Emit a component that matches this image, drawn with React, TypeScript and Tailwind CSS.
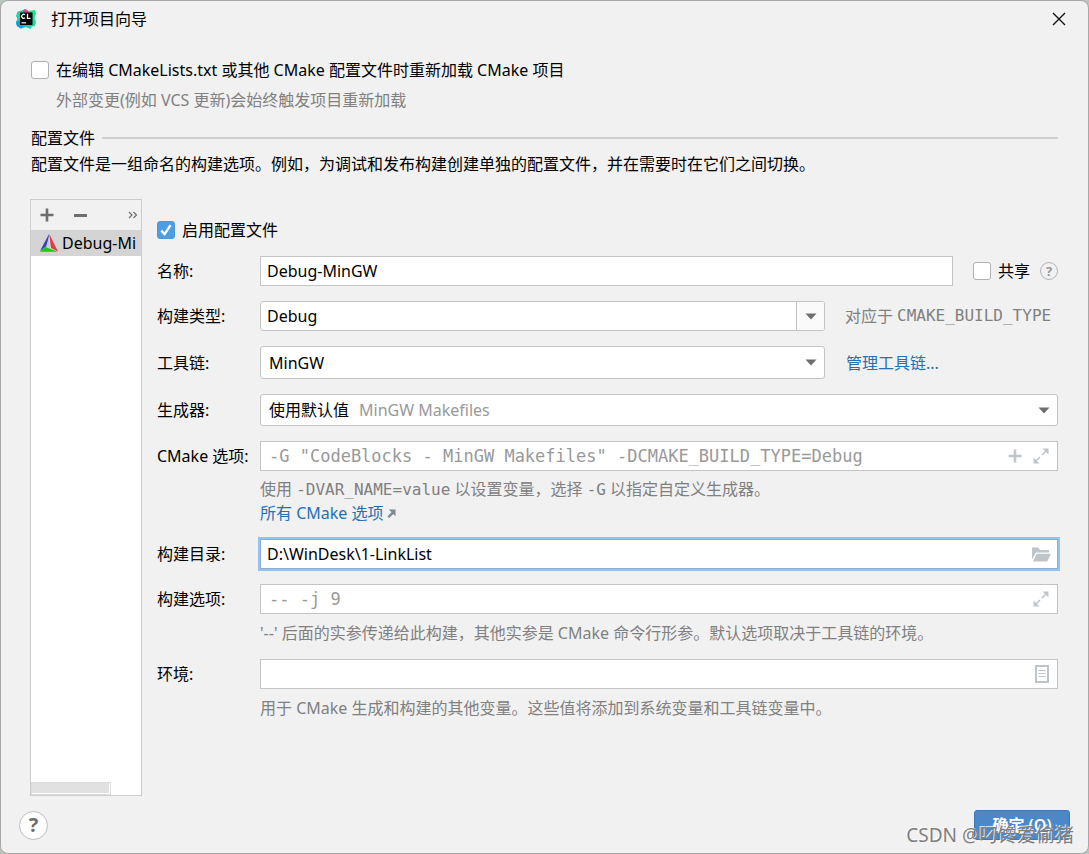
import React from "react";

const field = "w-full border border-[#c4c4c4] bg-white text-black outline-none";
const mono = "font-['DejaVu_Sans_Mono','Noto_Sans_CJK_SC',monospace]";
const hint = "text-[#808080]";

function CheckBox({ id, checked = false }: { id: string; checked?: boolean }) {
  return (
    <span className="relative flex h-[18px] w-[18px] shrink-0">
      <input
        id={id}
        type="checkbox"
        defaultChecked={checked}
        className="peer h-[18px] w-[18px] appearance-none rounded-[3px] border border-[#b0b0b0] bg-white checked:border-[#4b97d9] checked:bg-[#4f9ee3]"
      />
      <svg viewBox="0 0 18 18" className="pointer-events-none absolute inset-0 hidden h-[18px] w-[18px] peer-checked:block">
        <path d="M4.3 9.600l3.300 3.600 6-9" fill="none" stroke="#fff" strokeWidth="2.300" />
      </svg>
    </span>
  );
}

function Arrow() {
  return (
    <svg viewBox="0 0 12 7" className="h-[7px] w-3">
      <path d="M0.500 0.500h11L6 6.500z" fill="#6e6e6e" />
    </svg>
  );
}

function Logo() {
  return (
    <svg viewBox="0 0 20 20" className="h-5 w-5">
      <defs>
        <linearGradient id="cl" x1="0.9" y1="0" x2="0.1" y2="1">
          <stop offset="0" stopColor="#21e789" />
          <stop offset="0.6" stopColor="#1fd6a8" />
          <stop offset="1" stopColor="#009ae5" />
        </linearGradient>
      </defs>
      <path d="M1.500 2.500L7 1l4 1 8-1 1 4-1.500 4L20 13l-1 4-3 .5-1.500 2.500-4.500-2-5 1.500L1 17l-1-4 1.500-3L0 7z" fill="url(#cl)" />
      <path d="M6.500 2L8.500 0l3 1 1.500 3H7z" fill="#ed358c" />
      <path d="M0 13.500l3-2 4 5-2 3-4-2.500z" fill="#0a9fe0" />
      <path d="M4 3.500h12.500V16H4z" />
      <path d="M9 5.800a2 2 0 1 0 0 3M11.500 4.800v4.500h3" fill="none" stroke="#fff" strokeWidth="1.300" />
      <path d="M5.500 13.200h4.500v1.200H5.500z" fill="#fff" />
    </svg>
  );
}

function CMakeIcon() {
  return (
    <svg viewBox="0 0 18 18" className="h-[18px] w-[18px] shrink-0">
      <path d="M9 0L0 17l8-6z" fill="#3c3cc4" />
      <path d="M9.300 0L18 17.500l-7-3.500z" fill="#dd3f42" />
      <path d="M0 17.700l5-5 12.500 5z" fill="#14cc14" />
      <path d="M8.800 3l1.400 10.500-4-1.600z" fill="#c9c9cf" />
    </svg>
  );
}

function Expand() {
  return (
    <svg viewBox="0 0 16 16" className="h-4 w-4" fill="#bfc5c9">
      <path d="M9.500 0.500h6v6zM0.500 9.500v6h6z" />
      <path d="M13.500 2.500l-4.500 4.500M2.500 13.500l4.500-4.500" stroke="#bfc5c9" strokeWidth="1.500" />
    </svg>
  );
}

function Plus({ className }: { className: string }) {
  return (
    <svg viewBox="0 0 14 14" className={className} fill="currentColor">
      <path d="M5.700 0.500h2.600v5.200h5.200v2.600H8.300v5.200H5.700V8.300H0.500V5.700h5.200z" />
    </svg>
  );
}

function Row({ label, id, className, children }: { label: string; id: string; className: string; children: React.ReactNode }) {
  return (
    <div className={`flex items-center ${className}`}>
      <label htmlFor={id} className="w-[103px] shrink-0 whitespace-nowrap">{label}</label>
      {children}
    </div>
  );
}

export default function App() {
  return (
    <div className="min-h-screen bg-[#b9c4bb] font-['Noto_Sans','Noto_Sans_CJK_SC',sans-serif] text-base leading-6 text-black">
      <main className="relative flex min-h-screen flex-col rounded-lg border border-[#a8a8a8] bg-[#f1f1f1]">
        <header className="flex h-9 items-center pl-[15px] pr-[22px]">
          <Logo />
          <h1 className="ml-[15px] flex-1">打开项目向导</h1>
          <button type="button" aria-label="关闭" className="flex">
            <svg viewBox="0 0 14 14" className="h-[14px] w-[14px]">
              <path d="M1 1l12 12M13 1L1 13" stroke="#111" strokeWidth="1.400" />
            </svg>
          </button>
        </header>

        <section className="px-[30px] pt-[21px]">
          <div className="flex items-center gap-[7px]">
            <CheckBox id="reload" />
            <label htmlFor="reload">在编辑 CMakeLists.txt 或其他 CMake 配置文件时重新加载 CMake 项目</label>
          </div>
          <p className={`mt-[6px] pl-[25px] ${hint}`}>外部变更(例如 VCS 更新)会始终触发项目重新加载</p>
          <div className="mt-[14px] flex items-center gap-[7px]">
            <h2>配置文件</h2>
            <div className="h-[2px] flex-1 bg-[#cfcfcf]" />
          </div>
          <p className="mt-[2px]">配置文件是一组命名的构建选项。例如，为调试和发布构建创建单独的配置文件，并在需要时在它们之间切换。</p>
        </section>

        <div className="flex flex-1 pl-[29px] pr-[30px] pt-[23px]">
          <aside className="flex w-28 shrink-0 flex-col border border-[#cdcdcd] bg-white">
            <div className="flex h-[30px] items-center bg-[#f1f1f1] pl-[9px] pr-[3px] text-[#6e6e6e]">
              <button type="button" aria-label="添加" className="flex"><Plus className="h-[14px] w-[14px]" /></button>
              <button type="button" aria-label="移除" className="ml-5 flex h-[14px] items-center">
                <svg viewBox="0 0 13 3" className="h-[3px] w-[13px]"><path d="M0 0h13v3H0z" fill="currentColor" /></svg>
              </button>
              <button type="button" aria-label="更多" className="ml-auto flex">
                <svg viewBox="0 0 10 8" className="h-2 w-[10px]"><path d="M1 1l3 3-3 3M5.500 1l3 3-3 3" fill="none" stroke="currentColor" strokeWidth="1.200" /></svg>
              </button>
            </div>
            <button type="button" className="flex h-[26px] items-center gap-1 overflow-hidden whitespace-nowrap bg-[#d4d4d4] pl-[9px] text-left">
              <CMakeIcon />
              <span>Debug-Mi</span>
            </button>
            <div className="mt-auto h-[13px] w-20 border border-[#dcdcdc] bg-white pb-px pr-px">
              <div className="h-full bg-[#e1e1e1]" />
            </div>
          </aside>

          <form className="ml-[15px] min-w-0 flex-1 pt-[19px]">
            <div className="flex items-center gap-[7px]">
              <CheckBox id="enabled" checked />
              <label htmlFor="enabled">启用配置文件</label>
            </div>

            <Row label="名称:" id="name" className="mt-[14px]">
              <input id="name" defaultValue="Debug-MinGW" className={`${field} h-[30px] min-w-0 flex-1 px-[6px]`} />
              <div className="ml-[20px] flex items-center gap-[7px]">
                <CheckBox id="share" />
                <label htmlFor="share">共享</label>
              </div>
              <button type="button" aria-label="共享帮助" className="ml-[10px] flex h-[18px] w-[18px] items-center justify-center rounded-full border border-[#adb5bb] text-[13px] font-bold leading-none text-[#8f989e]">?</button>
            </Row>

            <Row label="构建类型:" id="type" className="mt-[15px]">
              <div className="flex h-[30px] min-w-0 flex-1 overflow-hidden rounded-[3px] border border-[#c4c4c4] bg-white">
                <input id="type" defaultValue="Debug" className="min-w-0 flex-1 px-[6px] outline-none" />
                <button type="button" aria-label="选择构建类型" className="flex w-[28px] items-center justify-center border-l border-[#c4c4c4] bg-[#fafafa]"><Arrow /></button>
              </div>
              <p className={`ml-5 flex w-[213px] shrink-0 items-center gap-1 whitespace-nowrap ${hint}`}>
                对应于 <code className={`${mono} text-base`}>CMAKE_BUILD_TYPE</code>
              </p>
            </Row>

            <Row label="工具链:" id="chain" className="mt-[15px]">
              <div className="relative min-w-0 flex-1">
                <select id="chain" className={`${field} block h-[33px] appearance-none rounded-[3px] px-2`}>
                  <option>MinGW</option>
                </select>
                <span className="pointer-events-none absolute inset-y-0 right-2 flex items-center"><Arrow /></span>
              </div>
              <a href="#toolchains" className="ml-[21px] w-[212px] shrink-0 text-[#2470b3]">管理工具链...</a>
            </Row>

            <Row label="生成器:" id="generator" className="mt-[15px]">
              <div className="relative min-w-0 flex-1">
                <select id="generator" className={`${field} block h-8 appearance-none rounded-[3px] px-2`}>
                  <option>使用默认值</option>
                </select>
                <span className="pointer-events-none absolute inset-y-0 left-[99px] flex items-center text-[#999]">MinGW Makefiles</span>
                <span className="pointer-events-none absolute inset-y-0 right-2 flex items-center"><Arrow /></span>
              </div>
            </Row>

            <Row label="CMake 选项:" id="options" className="mt-[15px]">
              <div className={`${field} flex h-[30px] min-w-0 items-center pr-2`}>
                <input id="options" placeholder={'-G "CodeBlocks - MinGW Makefiles" -DCMAKE_BUILD_TYPE=Debug'} className={`${mono} min-w-0 flex-1 pl-2 text-[17px] outline-none placeholder:text-[#999]`} />
                <button type="button" aria-label="添加选项" className="flex text-[#bfc5c9]"><Plus className="h-[14px] w-[14px]" /></button>
                <button type="button" aria-label="展开选项" className="ml-[11px] flex"><Expand /></button>
              </div>
            </Row>
            <div className="ml-[103px] mt-[7px] leading-[23px]">
              <p className={hint}>使用 <code className={`${mono} text-base`}>-DVAR_NAME=value</code> 以设置变量，选择 <code className={`${mono} text-base`}>-G</code> 以指定自定义生成器。</p>
              <a href="#cmake-options" className="flex w-fit items-center gap-[3px] text-[#2470b3]">
                所有 CMake 选项
                <svg viewBox="0 0 10 10" className="h-[9px] w-[9px]"><path d="M2 0.500h7.500V8L7 5.500 2.500 10 0.500 8 5 3.500z" fill="#7f8b91" /></svg>
              </a>
            </div>

            <Row label="构建目录:" id="dir" className="mt-[14px]">
              <div className="flex h-[30px] min-w-0 flex-1 items-center border border-[#87afda] bg-white pr-[6px] ring-2 ring-[#97c3f3]">
                <input id="dir" defaultValue="D:\WinDesk\1-LinkList" className="min-w-0 flex-1 pl-[6px] outline-none" />
                <button type="button" aria-label="浏览目录" className="flex">
                  <svg viewBox="0 0 19 15" className="h-[15px] w-[19px]" fill="#bfc5c9">
                    <path d="M0 0.500h6l2 2.500h9v2.500H4L0 12.500z" />
                    <path d="M4.800 6.800H19l-3.800 7.700H0.800z" />
                  </svg>
                </button>
              </div>
            </Row>

            <Row label="构建选项:" id="build" className="mt-[15px]">
              <div className={`${field} flex h-[30px] min-w-0 items-center pr-2`}>
                <input id="build" placeholder="-- -j 9" className={`${mono} min-w-0 flex-1 pl-2 text-[17px] outline-none placeholder:text-[#999]`} />
                <button type="button" aria-label="展开构建选项" className="flex"><Expand /></button>
              </div>
            </Row>
            <p className={`ml-[103px] mt-[7px] ${hint}`}>'--' 后面的实参传递给此构建，其他实参是 CMake 命令行形参。默认选项取决于工具链的环境。</p>

            <Row label="环境:" id="env" className="mt-[14px]">
              <div className={`${field} flex h-[30px] min-w-0 items-center pr-2`}>
                <input id="env" className="min-w-0 flex-1 px-[6px] outline-none" />
                <button type="button" aria-label="编辑环境变量" className="flex">
                  <svg viewBox="0 0 14 18" className="h-[18px] w-[14px]">
                    <path d="M1 1h12v16H1z" fill="none" stroke="#bfc5c9" strokeWidth="2" />
                    <path d="M3.500 5.500h7M3.500 8.500h7M3.500 11.500h7" stroke="#bfc5c9" />
                  </svg>
                </button>
              </div>
            </Row>
            <p className={`ml-[103px] mt-[7px] ${hint}`}>用于 CMake 生成和构建的其他变量。这些值将添加到系统变量和工具链变量中。</p>
          </form>
        </div>

        <footer className="flex items-center justify-between pb-[13px] pl-[18px] pr-[18px] pt-[14px]">
          <button type="button" aria-label="帮助" className="flex h-[29px] w-[29px] items-center justify-center rounded-full border border-[#bdbdbd] bg-white text-xl font-bold leading-none text-[#6e6e6e]">?</button>
          <button type="submit" className="h-[30px] w-24 rounded-[3px] border border-[#3f77b5] bg-[#4c87c8] font-semibold text-white">确定 (<u>O</u>)</button>
        </footer>

        <div className="pointer-events-none absolute bottom-1 right-[14px] text-[19px] leading-7 text-[#7f7f7f] [text-shadow:-1px_-1px_0_rgba(255,255,255,0.8)]">CSDN @叼馋爱偷猪</div>
      </main>
    </div>
  );
}
